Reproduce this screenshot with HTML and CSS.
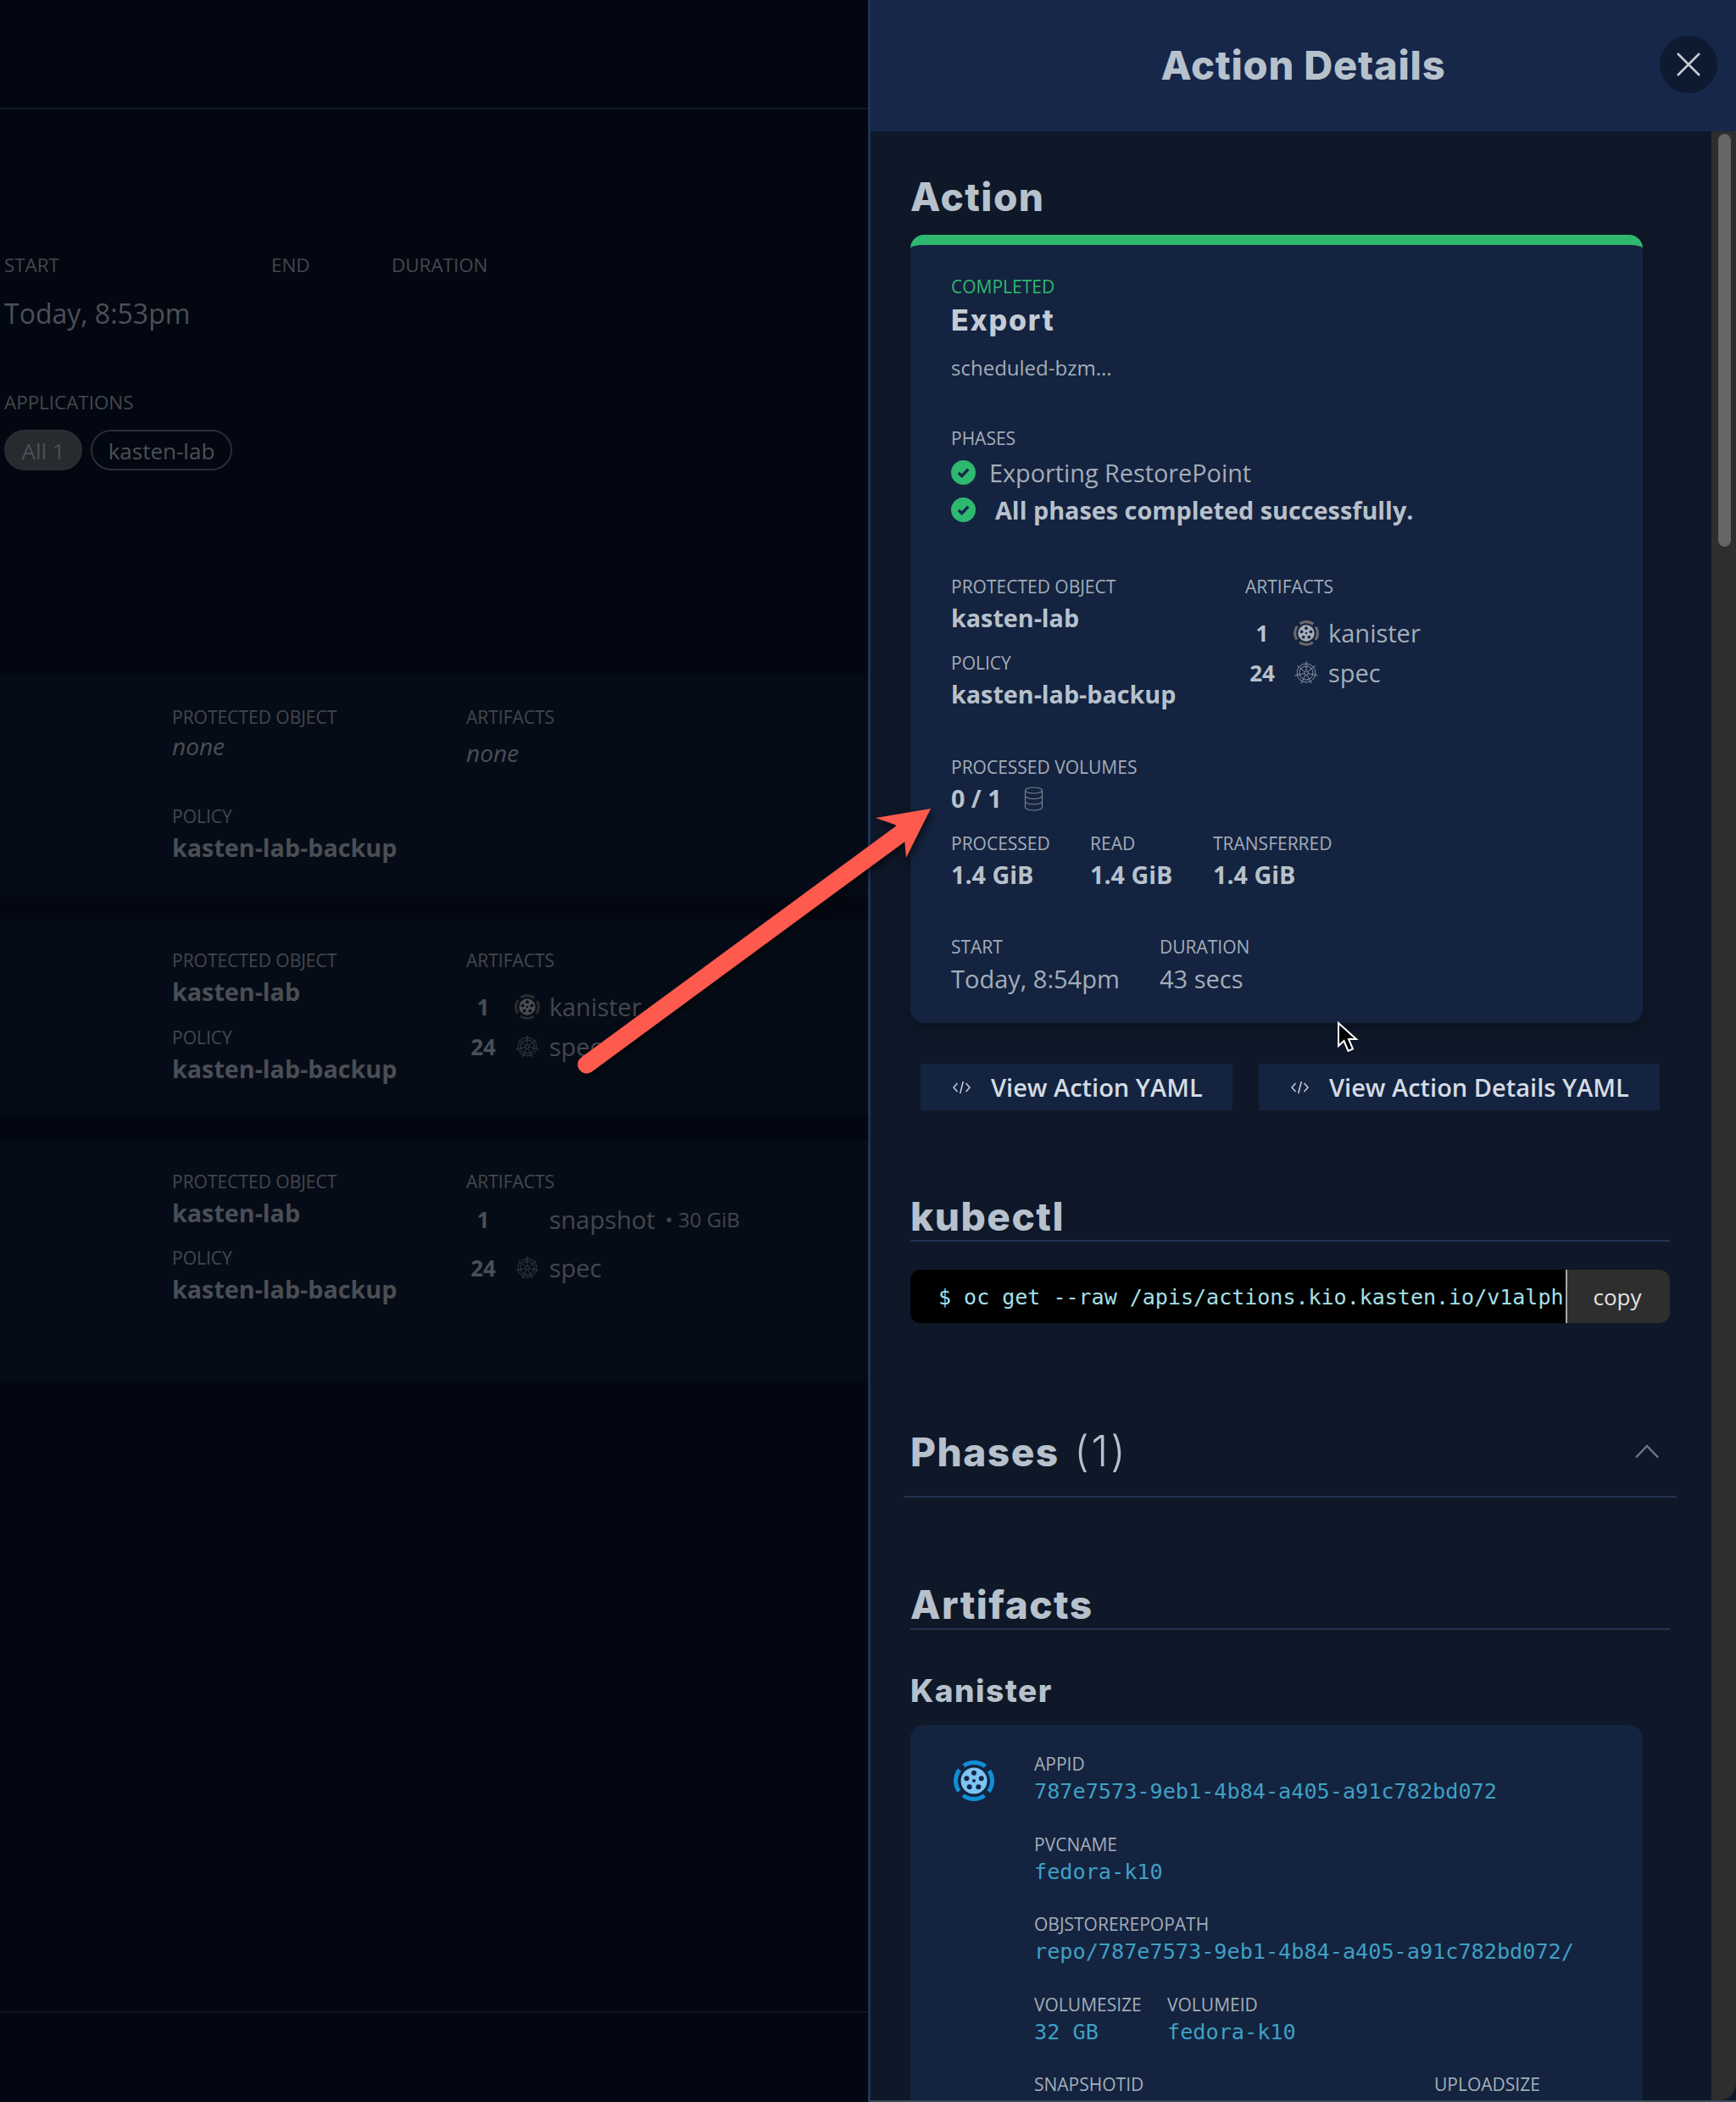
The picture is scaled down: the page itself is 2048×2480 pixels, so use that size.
FILE: index.html
```html
<!DOCTYPE html>
<html lang="en">
<head>
  <meta charset="UTF-8" />
  <title>Action Details</title>
  <link rel="stylesheet" href="styles.css">
</head>
<body>
  <svg class="defs" width="0" height="0">
    <symbol id="reel" viewBox="0 0 48 48">
      <circle class="reel-ring" cx="24" cy="24" r="21.5" fill="none" stroke-width="5" stroke-dasharray="27 6.8" stroke-dashoffset="13.5"/>
      <circle class="reel-disc" cx="24" cy="24" r="15.5"/>
      <g class="reel-hole">
        <circle cx="24" cy="14.7" r="3"/>
        <circle cx="15.3" cy="21.3" r="3"/>
        <circle cx="32.7" cy="21.3" r="3"/>
        <circle cx="18.7" cy="31.3" r="3"/>
        <circle cx="29.3" cy="31.3" r="3"/>
        <circle cx="24" cy="24" r="2"/>
      </g>
    </symbol>
    <symbol id="helm" viewBox="0 0 26 26">
      <g fill="none" stroke="currentColor" stroke-width="0.8">
        <circle cx="13" cy="13" r="9.5"/>
        <circle cx="13" cy="13" r="7"/>
        <circle cx="13" cy="13" r="2"/>
        <path d="M13 11V3.5M14.56 11.75L20.43 7.08M14.95 13.45L22.26 15.12M13.87 14.8L17.12 21.56M12.13 14.8L8.88 21.56M11.05 13.45L3.74 15.12M11.44 11.75L5.57 7.08"/>
        <path d="M13 3.5V1M20.43 7.08L22.38 5.52M22.26 15.12L24.7 15.68M17.12 21.56L18.2 23.8M8.88 21.56L7.8 23.8M3.74 15.12L1.3 15.68M5.57 7.08L3.62 5.52"/>
      </g>
    </symbol>
    <symbol id="check" viewBox="0 0 29 29">
      <circle cx="14.5" cy="14.5" r="14.5" fill="#2fb86f"/>
      <path d="M8.8 15l4 3.7 7.4-8" fill="none" stroke="#14264a" stroke-width="3.4"/>
    </symbol>
    <symbol id="db" viewBox="0 0 23 29">
      <g fill="none" stroke="currentColor" stroke-width="1.2">
        <ellipse cx="11.5" cy="4.5" rx="10" ry="3.5"/>
        <path d="M1.5 4.5v20c0 2 4.5 3.5 10 3.5s10-1.500 10-3.500v-20"/>
        <path d="M1.500 11c0 2 4.500 3.500 10 3.500s10-1.500 10-3.500M1.500 17.500c0 2 4.500 3.500 10 3.500s10-1.500 10-3.500"/>
      </g>
    </symbol>
    <symbol id="code" viewBox="0 0 21 16">
      <path d="M5.500 3L1 8l4.500 5M15.500 3L20 8l-4.500 5M12.300 1L8.700 15" fill="none" stroke="currentColor" stroke-width="1.500"/>
    </symbol>
  </svg>

  <div class="app">
    <!-- page behind the panel -->
    <main class="page">
      <div class="topbar"></div>

      <section class="summary">
        <div class="times">
          <div class="lbl">START</div>
          <div class="lbl">END</div>
          <div class="lbl">DURATION</div>
        </div>
        <div class="today">Today, 8:53pm</div>
        <div class="lbl apps-lbl">APPLICATIONS</div>
        <div class="pills">
          <span class="pill pill-on">All 1</span>
          <span class="pill">kasten-lab</span>
        </div>
      </section>

      <section class="row row-one">
        <div class="row-col">
          <div class="lbl">PROTECTED OBJECT</div>
          <div class="none">none</div>
          <div class="lbl policy-far">POLICY</div>
          <div class="val">kasten-lab-backup</div>
        </div>
        <div>
          <div class="lbl">ARTIFACTS</div>
          <div class="none none-art">none</div>
        </div>
      </section>

      <section class="row row-two">
        <div class="row-col">
          <div class="lbl">PROTECTED OBJECT</div>
          <div class="val">kasten-lab</div>
          <div class="lbl policy policy-wide">POLICY</div>
          <div class="val">kasten-lab-backup</div>
        </div>
        <div>
          <div class="lbl">ARTIFACTS</div>
          <div class="arts">
            <div class="art"><b>1</b><svg class="art-ico reel-dim"><use href="#reel"/></svg><span>kanister</span></div>
            <div class="art"><b>24</b><svg class="art-ico helm-ico"><use href="#helm"/></svg><span>spec</span></div>
          </div>
        </div>
      </section>

      <section class="row row-three">
        <div class="row-col">
          <div class="lbl">PROTECTED OBJECT</div>
          <div class="val">kasten-lab</div>
          <div class="lbl policy">POLICY</div>
          <div class="val">kasten-lab-backup</div>
        </div>
        <div>
          <div class="lbl">ARTIFACTS</div>
          <div class="arts arts-wide">
            <div class="art"><b>1</b><i class="art-ico"></i><span>snapshot</span><em>• 30 GiB</em></div>
            <div class="art"><b>24</b><svg class="art-ico helm-ico"><use href="#helm"/></svg><span>spec</span></div>
          </div>
        </div>
      </section>

      <div class="footline"></div>
    </main>

    <!-- side panel -->
    <aside class="panel">
      <header class="panel-head">
        <span></span>
        <h1>Action Details</h1>
        <button class="close">
          <svg width="30" height="30" viewBox="0 0 30 30"><path d="M2 2l26 26M28 2L2 28" fill="none" stroke="#c5cdd6" stroke-width="2.500"/></svg>
        </button>
      </header>

      <div class="panel-body">
        <div class="scroll">
          <h2 class="first">Action</h2>
          <div class="card">
            <div class="lbl done">COMPLETED</div>
            <div class="kind">Export</div>
            <div class="sched">scheduled-bzm...</div>

            <div class="lbl phases-lbl">PHASES</div>
            <div class="phase"><svg class="tick"><use href="#check"/></svg><span>Exporting RestorePoint</span></div>
            <div class="phase phase-all"><svg class="tick"><use href="#check"/></svg><span>All phases completed successfully.</span></div>

            <div class="two">
              <div class="two-left">
                <div class="lbl">PROTECTED OBJECT</div>
                <div class="val">kasten-lab</div>
                <div class="lbl policy">POLICY</div>
                <div class="val">kasten-lab-backup</div>
              </div>
              <div>
                <div class="lbl">ARTIFACTS</div>
                <div class="arts">
                  <div class="art"><b>1</b><svg class="art-ico reel-grey"><use href="#reel"/></svg><span>kanister</span></div>
                  <div class="art"><b>24</b><svg class="art-ico helm-ico"><use href="#helm"/></svg><span>spec</span></div>
                </div>
              </div>
            </div>

            <div class="lbl vols-lbl">PROCESSED VOLUMES</div>
            <div class="val vols">0 / 1 <svg class="db"><use href="#db"/></svg></div>

            <div class="stats">
              <div class="stat-a"><div class="lbl">PROCESSED</div><div class="val">1.4 GiB</div></div>
              <div class="stat-b"><div class="lbl">READ</div><div class="val">1.4 GiB</div></div>
              <div><div class="lbl">TRANSFERRED</div><div class="val">1.4 GiB</div></div>
            </div>

            <div class="times-b">
              <div class="time-a"><div class="lbl">START</div><div class="time-val">Today, 8:54pm</div></div>
              <div><div class="lbl">DURATION</div><div class="time-val">43 secs</div></div>
            </div>
          </div>

          <div class="yaml-btns">
            <button class="yaml yaml-a"><svg class="code"><use href="#code"/></svg>View Action YAML</button>
            <button class="yaml yaml-b"><svg class="code"><use href="#code"/></svg>View Action Details YAML</button>
          </div>

          <h2 class="ruled kubectl">kubectl</h2>
          <div class="cmd">
            <code>$ oc get --raw /apis/actions.kio.kasten.io/v1alph</code>
            <button class="copy">copy</button>
          </div>

          <div class="phases-head">
            <h2>Phases <span>(1)</span></h2>
            <svg width="30" height="17" viewBox="0 0 30 17"><path d="M2 15.500L15 2l13 13.500" fill="none" stroke="#6a7686" stroke-width="2.500"/></svg>
          </div>

          <h2 class="ruled artifacts">Artifacts</h2>
          <h3>Kanister</h3>

          <div class="card-kanister">
            <svg class="reel-blue"><use href="#reel"/></svg>
            <div class="fields">
              <div class="lbl">APPID</div>
              <div class="mono">787e7573-9eb1-4b84-a405-a91c782bd072</div>
              <div class="lbl">PVCNAME</div>
              <div class="mono">fedora-k10</div>
              <div class="lbl">OBJSTOREREPOPATH</div>
              <div class="mono">repo/787e7573-9eb1-4b84-a405-a91c782bd072/</div>
              <div class="pair">
                <div class="pair-a"><div class="lbl">VOLUMESIZE</div><div class="mono">32 GB</div></div>
                <div><div class="lbl">VOLUMEID</div><div class="mono">fedora-k10</div></div>
              </div>
              <div class="pair">
                <div class="pair-snap"><div class="lbl">SNAPSHOTID</div></div>
                <div><div class="lbl">UPLOADSIZE</div></div>
              </div>
            </div>
          </div>
        </div>
        <div class="track"><div class="thumb"></div></div>
      </div>
    </aside>
  </div>

  <!-- annotation drawn on top of the screenshot -->
  <svg class="arrow" width="2048" height="2480" viewBox="0 0 2048 2480">
    <path d="M692 1256L1062 984" fill="none" stroke="#fe5a4d" stroke-width="21" stroke-linecap="round"/>
    <path d="M1098 954L1033 965L1056 973L1067 990L1069 1012Z" fill="#fe5a4d"/>
  </svg>
  <svg class="cursor" width="26" height="38" viewBox="0 0 26 38">
    <path d="M2 2V29L8.500 23L13.500 35L19 32.500L14 21H23Z" fill="#000" stroke="#fff" stroke-width="2"/>
  </svg>
</body>
</html>
```
FILE: styles.css
```css
html, body {
  margin: 0;
  height: 2480px;
  overflow: hidden;
  background-color: #030711;
  font-family: 'Open Sans', sans-serif;
}

.defs {
  position: absolute;
}

.app {
  display: flex;
  height: 2480px;
}

h1, h2, h3 {
  margin: 0;
  font-family: 'Inter', sans-serif;
  font-weight: 800;
  color: #b7c1cc;
}

button {
  font-family: inherit;
  border: none;
  padding: 0;
  cursor: pointer;
}

/* shared text */
.lbl {
  font-size: 21px;
  line-height: 28px;
  color: #a3adba;
}

.val {
  margin-top: 3px;
  font-size: 28.7px;
  line-height: 40px;
  font-weight: 700;
  color: #b7c1cc;
}

.policy {
  margin-top: 19px;
}

/* artifacts list */
.arts {
  margin-top: 17px;
}

.art {
  display: flex;
  align-items: center;
  height: 47px;
  font-size: 29px;
  color: #a3adba;
}

.art b {
  width: 40px;
  text-align: center;
  font-size: 26px;
  color: #b7c1cc;
}

.art-ico {
  width: 32px;
  height: 30px;
  margin: 0 10px 0 16px;
  flex: none;
}

.helm-ico {
  color: #8d98a6;
}

.reel-grey {
  --ring: #6c6a68;
  --disc: #a8adb4;
  --hole: #14264a;
}

.reel-dim {
  --ring: #2a2b2d;
  --disc: #4a4d50;
  --hole: #060c17;
}

.reel-blue {
  width: 48px;
  height: 48px;
  margin-top: 10px;
  flex: none;
  --ring: #0f8fd6;
  --disc: #7cc4f2;
  --hole: #14264a;
}

.reel-ring { stroke: var(--ring); }
.reel-disc { fill: var(--disc); }
.reel-hole { fill: var(--hole); }

/* left page, dimmed by the overlay */
.page {
  width: 1024px;
  flex: none;
  background-color: #030711;
}

.page .lbl { color: #43474e; }
.page .val { color: #4a4e55; }
.page .art { color: #43474e; }
.page .art b { color: #4a4e55; }
.page .helm-ico { color: #3b3f45; }

.topbar {
  height: 127px;
  border-bottom: 2px solid #121a29;
}

.summary {
  padding: 170px 0 0 5px;
  height: 256px;
}

.summary .lbl {
  font-size: 22.4px;
}

.times {
  display: grid;
  grid-template-columns: 315px 142px auto;
}

.today {
  margin-top: 23px;
  font-size: 32px;
  line-height: 40px;
  color: #4c5056;
}

.apps-lbl {
  margin-top: 71px;
}

.pills {
  display: flex;
  gap: 10px;
  margin-top: 18px;
}

.pill {
  height: 48px;
  line-height: 46px;
  box-sizing: border-box;
  padding: 0 18.5px;
  border: 2px solid #2b2e34;
  border-radius: 24px;
  font-size: 26px;
  color: #4c5056;
}

.pill-on {
  background-color: #272a2e;
}

.row {
  display: flex;
  box-sizing: border-box;
  padding-left: 203px;
  background-color: #060c17;
}

.row-col {
  width: 347px;
}

.row-one {
  margin-top: 240px;
  height: 263px;
  padding-top: 37px;
}

.row-two {
  margin-top: 27px;
  height: 230px;
  padding-top: 34px;
}

.row-three {
  margin-top: 30px;
  height: 285px;
  padding-top: 35px;
}

.none {
  margin-top: 2px;
  font-size: 28px;
  line-height: 36px;
  font-style: italic;
  color: #4a4e55;
}

.none-art {
  margin-top: 10px;
}

.policy-far {
  margin-top: 51px;
}

.policy-wide {
  margin-top: 20px;
}

.arts-wide {
  display: flex;
  flex-direction: column;
  gap: 10px;
  margin-top: 7px;
}

.art em {
  margin-left: 12px;
  font-style: normal;
  font-size: 24px;
}

.footline {
  margin-top: 743px;
  border-top: 2px solid #0f1522;
}

/* panel */
.panel {
  width: 1024px;
  flex: none;
  box-sizing: border-box;
  height: 2480px;
  border-left: 3px solid #1f3357;
  border-bottom: 2px solid #3a4a5c;
  display: flex;
  flex-direction: column;
  background-color: #0e1828;
}

.panel-head {
  height: 155px;
  flex: none;
  display: grid;
  grid-template-columns: 1fr auto 1fr;
  align-items: center;
  background-color: #16274a;
}

.panel-head h1 {
  margin-bottom: 2px;
  font-size: 47px;
  line-height: 56px;
  letter-spacing: 0.8px;
}

.close {
  justify-self: end;
  width: 68px;
  height: 68px;
  margin: 0 22px 4px 0;
  border-radius: 50%;
  background-color: #0e1a30;
  display: flex;
  align-items: center;
  justify-content: center;
}

.panel-body {
  flex: 1;
  display: flex;
  min-height: 0;
}

.scroll {
  flex: 1;
  padding-left: 47px;
  overflow: hidden;
}

.track {
  width: 29px;
  flex: none;
  background-color: #2e2e2e;
  border-bottom-right-radius: 20px;
}

.thumb {
  width: 15px;
  height: 487px;
  margin: 3px 0 0 8px;
  border-radius: 8px;
  background-color: #666;
}

h2 {
  font-size: 46px;
  line-height: 56px;
  letter-spacing: 1.5px;
}

h2.first {
  margin-top: 49px;
}

h2.ruled {
  width: 896px;
  border-bottom: 2px solid #233352;
}

.card {
  box-sizing: border-box;
  width: 864px;
  height: 930px;
  margin-top: 17px;
  padding: 35px 0 0 48px;
  border-top: 12px solid #2fb86f;
  border-radius: 16px;
  background-color: #14233f;
  box-shadow: 0 6px 16px rgba(0, 0, 0, 0.25);
}

.done {
  color: #2fb86f;
}

.kind {
  margin-top: 6px;
  font-family: 'Inter', sans-serif;
  font-size: 34px;
  line-height: 40px;
  font-weight: 800;
  letter-spacing: 1.8px;
  color: #c3cbd5;
}

.sched {
  margin-top: 20px;
  font-size: 24px;
  line-height: 32px;
  color: #a3adba;
}

.phases-lbl {
  margin-top: 53px;
}

.phases-lbl + .phase {
  margin-top: 4px;
}

.phase {
  display: flex;
  align-items: center;
  height: 44px;
  font-size: 28.8px;
  color: #a3adba;
}

.tick {
  width: 29px;
  height: 29px;
  margin-right: 16px;
  flex: none;
}

.phase-all {
  margin-bottom: 1px;
  font-weight: 700;
  color: #b7c1cc;
}

.phase-all .tick {
  margin-right: 23px;
}

.two {
  display: flex;
  margin-top: 55px;
}

.two-left {
  width: 347px;
}

.vols-lbl {
  margin-top: 52px;
}

.vols {
  display: flex;
  align-items: center;
}

.db {
  width: 23px;
  height: 29px;
  margin-left: 26px;
  color: #76818f;
}

.stats {
  display: flex;
  margin-top: 19px;
}

.stat-a {
  width: 164px;
}

.stat-b {
  width: 145px;
}

.times-b {
  display: flex;
  margin-top: 51px;
}

.time-a {
  width: 246px;
}

.time-val {
  margin-top: 4px;
  font-size: 29px;
  line-height: 40px;
  color: #a3adba;
}

.yaml-btns {
  display: flex;
  gap: 31px;
  margin: 48px 0 0 12px;
}

.yaml {
  display: flex;
  align-items: center;
  height: 55px;
  background-color: #14233f;
  color: #d4dbe5;
  font-size: 29px;
  font-weight: 600;
  white-space: nowrap;
}

.yaml-a {
  width: 368px;
  padding-left: 38px;
}

.yaml-b {
  width: 473px;
  padding-left: 38px;
}

.code {
  width: 21px;
  height: 16px;
  margin-right: 24px;
  color: #c8d0da;
  flex: none;
}

h2.kubectl {
  margin-top: 97px;
}

.cmd {
  display: flex;
  width: 896px;
  height: 63px;
  margin-top: 33px;
  border-radius: 12px;
  overflow: hidden;
  background-color: #000;
}

.cmd code {
  width: 773px;
  flex: none;
  box-sizing: border-box;
  padding-left: 33px;
  overflow: hidden;
  white-space: nowrap;
  font-family: 'DejaVu Sans Mono', monospace;
  font-size: 25px;
  line-height: 65px;
  color: #a5e0e8;
}

.copy {
  flex: 1;
  padding-right: 3px;
  border-left: 2px solid #a8a8a8;
  background-color: #2e2e2e;
  color: #e2e2e2;
  font-size: 26px;
}

.phases-head {
  display: flex;
  align-items: center;
  justify-content: space-between;
  box-sizing: border-box;
  width: 912px;
  margin: 123px 0 0 -8px;
  padding: 0 20px 24px 8px;
  border-bottom: 2px solid #233352;
}

.phases-head span {
  margin-left: 6px;
  font-weight: 300;
  font-size: 50px;
  letter-spacing: 3px;
}

h2.artifacts {
  margin-top: 98px;
}

h3 {
  margin-top: 48px;
  font-size: 37px;
  line-height: 48px;
  letter-spacing: 1.5px;
}

.card-kanister {
  display: flex;
  width: 864px;
  height: 500px;
  margin-top: 16px;
  box-sizing: border-box;
  padding: 32px 0 0 51px;
  border-radius: 16px;
  background-color: #14233f;
}

.fields {
  margin-left: 47px;
}

.mono {
  height: 36px;
  margin-bottom: 30.5px;
  font-family: 'DejaVu Sans Mono', monospace;
  font-size: 25.2px;
  line-height: 38px;
  color: #3fa0c4;
}

.pair {
  display: flex;
}

.pair-a {
  width: 157px;
}

.pair-snap {
  width: 472px;
}

/* overlays */
.arrow {
  position: absolute;
  left: 0;
  top: 0;
  filter: drop-shadow(3px 4px 5px rgba(0, 0, 0, 0.55));
  pointer-events: none;
}

.cursor {
  position: absolute;
  left: 1577px;
  top: 1205px;
}
```
